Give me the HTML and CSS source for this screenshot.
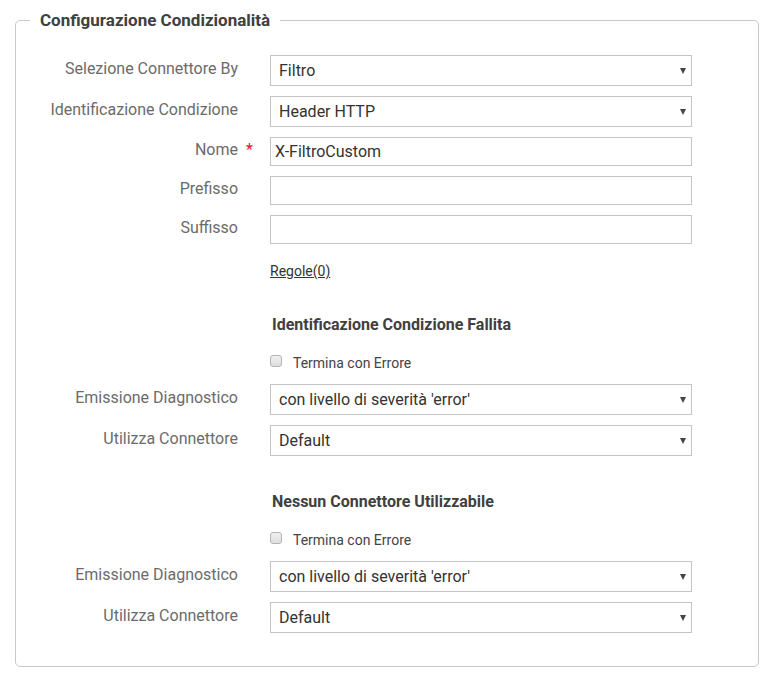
FILE: index.html
```html
<!DOCTYPE html>
<html>
<head>
<meta charset="utf-8">
<link rel="stylesheet" href="styles.css">
</head>
<body>
<fieldset class="box">
  <legend class="box-title">Configurazione Condizionalità</legend>
  <div class="form">
    <div class="row row-sel">
      <label class="lbl">Selezione Connettore By</label>
      <div class="sel"><select><option>Filtro</option></select></div>
    </div>
    <div class="row row-sel">
      <label class="lbl">Identificazione Condizione</label>
      <div class="sel"><select><option>Header HTTP</option></select></div>
    </div>
    <div class="row row-inp">
      <label class="lbl req">Nome<span class="star">*</span></label>
      <input class="inp" type="text" value="X-FiltroCustom">
    </div>
    <div class="row row-inp">
      <label class="lbl">Prefisso</label>
      <input class="inp" type="text" value="">
    </div>
    <div class="row row-inp">
      <label class="lbl">Suffisso</label>
      <input class="inp" type="text" value="">
    </div>
    <div class="row row-link">
      <span></span>
      <a class="link" href="#">Regole(0)</a>
    </div>

    <div class="row row-head">
      <span></span>
      <div class="subhead">Identificazione Condizione Fallita</div>
    </div>
    <div class="row row-check">
      <span></span>
      <label class="check"><input type="checkbox"><span>Termina con Errore</span></label>
    </div>
    <div class="row row-sel">
      <label class="lbl">Emissione Diagnostico</label>
      <div class="sel"><select><option>con livello di severità 'error'</option></select></div>
    </div>
    <div class="row row-sel">
      <label class="lbl">Utilizza Connettore</label>
      <div class="sel"><select><option>Default</option></select></div>
    </div>

    <div class="row row-head second">
      <span></span>
      <div class="subhead">Nessun Connettore Utilizzabile</div>
    </div>
    <div class="row row-check">
      <span></span>
      <label class="check"><input type="checkbox"><span>Termina con Errore</span></label>
    </div>
    <div class="row row-sel">
      <label class="lbl">Emissione Diagnostico</label>
      <div class="sel"><select><option>con livello di severità 'error'</option></select></div>
    </div>
    <div class="row row-sel last">
      <label class="lbl">Utilizza Connettore</label>
      <div class="sel"><select><option>Default</option></select></div>
    </div>
  </div>
</fieldset>
</body>
</html>
```

FILE: styles.css
```css
html, body {
  margin: 0;
  padding: 0;
  background: #ffffff;
}
body {
  font-family: Roboto, "Noto Sans", "Liberation Sans", sans-serif;
  color: #333333;
}
.box {
  margin: 9px 12px 0 15px;
  padding: 0;
  border: 1px solid #c8c8c8;
  border-radius: 5px;
  box-sizing: border-box;
  width: 744px;
}
.box-title {
  margin-left: 14px;
  padding: 0 10px;
  font-size: 17px;
  font-weight: 700;
  line-height: 22px;
  color: #404040;
}
.form {
  padding: 24px 0 33px 0;
}
.row {
  display: grid;
  grid-template-columns: 222px 422px;
  column-gap: 32px;
  align-items: center;
  margin-bottom: 10px;
}
.row.last { margin-bottom: 0; }
.lbl {
  text-align: right;
  font-size: 16px;
  color: #6b6b6b;
  line-height: 20px;
  padding-bottom: 3px;
  position: relative;
}
.star {
  position: absolute;
  left: 100%;
  margin-left: 8px;
  top: 0;
  color: #e8112d;
  font-size: 16px;
}
.sel {
  position: relative;
  height: 31px;
}
.sel select {
  appearance: none;
  -webkit-appearance: none;
  width: 100%;
  height: 31px;
  box-sizing: border-box;
  border: 1px solid #c4c4c4;
  border-radius: 0;
  background: #ffffff;
  padding: 0 24px 0 8px;
  font-family: Roboto, "Noto Sans", "Liberation Sans", sans-serif;
  font-size: 16px;
  color: #333333;
  margin: 0;
  outline: none;
}
.sel::after {
  content: "";
  position: absolute;
  right: 6px;
  top: 13px;
  border-left: 3px solid transparent;
  border-right: 3px solid transparent;
  border-top: 6px solid #444444;
  pointer-events: none;
}
.inp {
  height: 29px;
  box-sizing: border-box;
  width: 100%;
  margin: 0;
  border: 1px solid #c4c4c4;
  border-radius: 0;
  padding: 0 4px;
  font-family: Roboto, "Noto Sans", "Liberation Sans", sans-serif;
  font-size: 16px;
  color: #333333;
  outline: none;
}
.row-link {
  margin-top: 17px;
  margin-bottom: 34px;
}
.link {
  font-size: 14px;
  line-height: 20px;
  color: #333333;
  text-decoration: underline;
  justify-self: start;
}
.subhead {
  font-size: 16px;
  font-weight: 700;
  line-height: 20px;
  color: #404040;
  padding-left: 2px;
}
.row-head { margin-bottom: 18px; }
.row-head.second { margin-top: 36px; }
.row-check { margin-bottom: 11px; }
.check {
  display: flex;
  align-items: center;
  font-size: 14px;
  line-height: 20px;
  color: #444444;
}
.check input {
  appearance: none;
  -webkit-appearance: none;
  margin: 0 11px 0 0;
  width: 12px;
  height: 12px;
  box-sizing: border-box;
  border: 1px solid #b4b4b4;
  border-radius: 3px;
  background: linear-gradient(#f0f0f0, #dedede);
  position: relative;
  top: -2px;
}
```
